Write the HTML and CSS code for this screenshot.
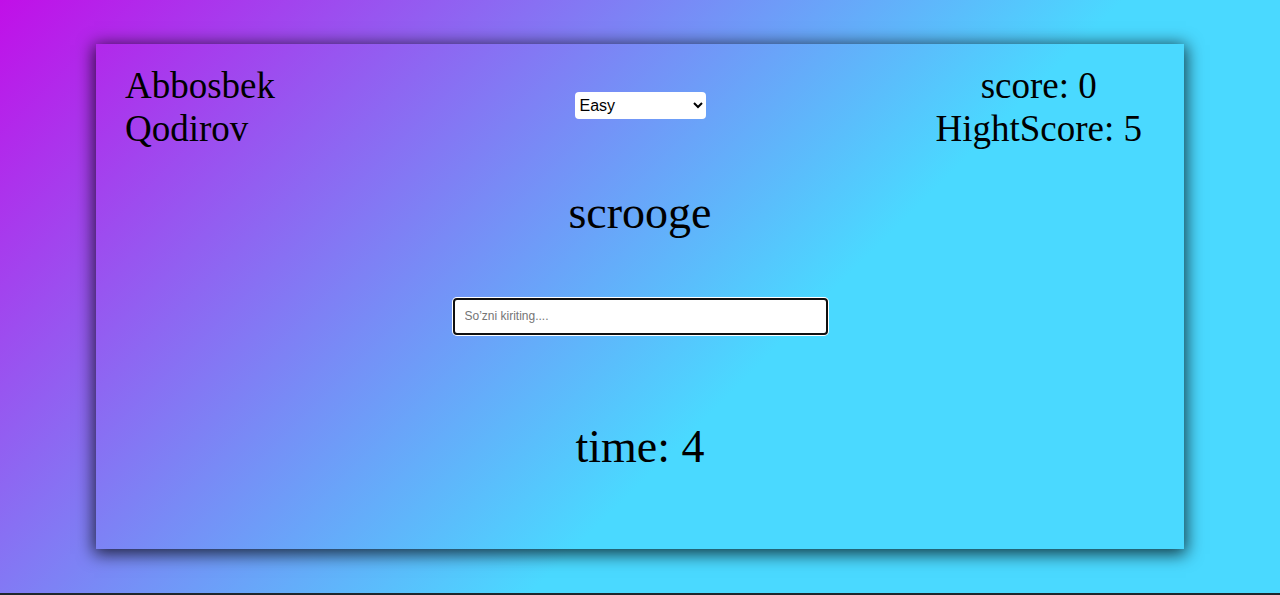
FILE: index.html
```html
<!DOCTYPE html>
<html lang="en">
<head>
<meta charset="UTF-8">
<title>Speed Typer</title>
<link rel="stylesheet" href="styles.css">
</head>
<body>
  <main class="card">
    <header class="top">
      <div class="author">Abbosbek<br>Qodirov</div>
      <select class="level">
        <option>Easy</option>
        <option>Medium</option>
        <option>Hard</option>
      </select>
      <div class="scores">
        <div>score: 0</div>
        <div>HightScore: 5</div>
      </div>
    </header>
    <h1 class="word">scrooge</h1>
    <input class="answer" type="text" placeholder="So’zni kiriting....">
    <div class="time">time: 4</div>
  </main>
</body>
</html>
```

FILE: styles.css
```css
html {
  background: #1e272c;
}

body {
  margin: 0;
  height: 593px;
  background: linear-gradient(135deg, #c10fe8 0%, #4ad9ff 60%);
  display: flex;
  align-items: center;
  justify-content: center;
  font-family: "Liberation Serif", "Times New Roman", serif;
  color: #000;
}

.card {
  width: 85%;
  height: 85vh;
  box-sizing: border-box;
  box-shadow: 0 3px 16px 2px rgba(0, 0, 0, 0.75);
  display: flex;
  flex-direction: column;
  align-items: center;
}

.top {
  align-self: stretch;
  display: grid;
  grid-template-columns: 1fr auto 1fr;
  align-items: center;
  padding: 20px 29px 0 29px;
  font-size: 37px;
}

.author {
  justify-self: start;
}

.scores {
  justify-self: end;
  margin-right: 13px;
  text-align: center;
}

.level {
  width: 131px;
  height: 27px;
  margin-top: -2px;
  border: none;
  border-radius: 4px;
  background: #fff;
  font-family: "Liberation Sans", Arial, sans-serif;
  font-size: 16px;
  color: #000;
  padding: 0 0 0 1px;
}

.word {
  margin: 36px 0 0;
  font-size: 46px;
  font-weight: normal;
  line-height: 53px;
}

.answer {
  margin-top: 59px;
  width: 375px;
  height: 37px;
  box-sizing: border-box;
  border: 2px solid #101010;
  border-radius: 4px;
  box-shadow: 0 0 0 1px #fff;
  background: #fff;
  padding: 0 10px;
  font-family: "Liberation Sans", Arial, sans-serif;
  font-size: 12px;
  outline: none;
}

.answer::placeholder {
  color: #757575;
}

.time {
  margin-top: 85px;
  font-size: 46px;
  line-height: 53px;
}
```
